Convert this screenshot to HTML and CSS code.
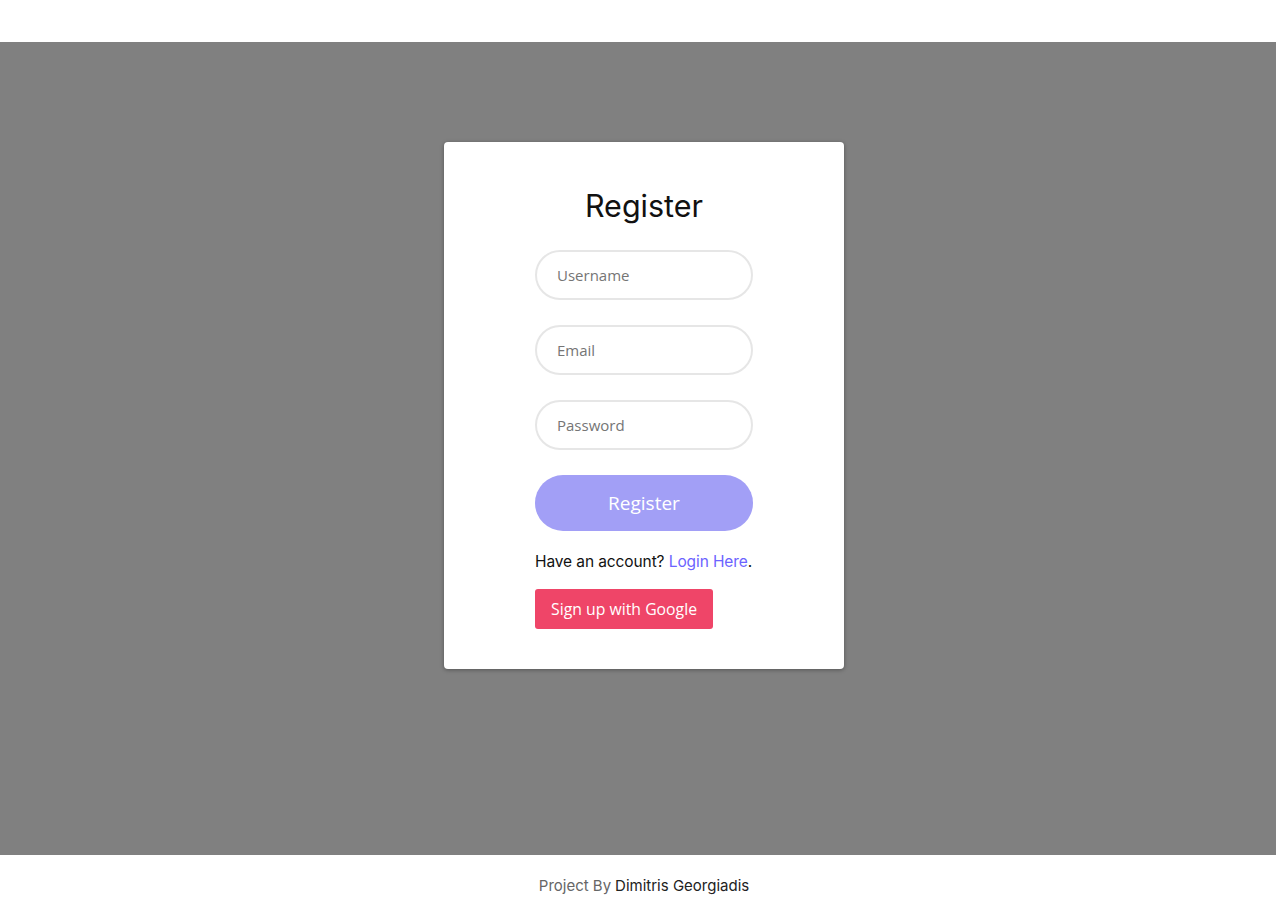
FILE: index.html
```html
<!DOCTYPE html>
<html>
<head>
<meta charset="utf-8">
<link rel="stylesheet" href="styles.css">
</head>
<body>
<header class="topbar"></header>
<main class="stage">
  <div class="card">
    <h1 class="title">Register</h1>
    <form class="form">
      <input class="field" type="text" placeholder="Username">
      <input class="field" type="email" placeholder="Email">
      <input class="field" type="password" placeholder="Password">
      <button class="btn-register" type="button">Register</button>
      <p class="have">Have an account? <a class="login" href="#">Login Here</a>.</p>
      <button class="btn-google" type="button">Sign up with Google</button>
    </form>
  </div>
</main>
<footer class="footer">
  <span class="by">Project By</span> <span class="name">Dimitris Georgiadis</span>
</footer>
</body>
</html>
```
FILE: styles.css
```css
* { box-sizing: border-box; }
html, body { margin: 0; padding: 0; overflow: hidden; }
body {
  font-family: "Inter", "Liberation Sans", sans-serif;
  background: #fff;
}
.topbar { height: 42px; background: #fff; }
.stage {
  height: 813px;
  background: #808080;
  padding-top: 100px;
  padding-left: 12px;
  display: flex;
  justify-content: center;
  align-items: flex-start;
}
.card {
  width: 400px;
  height: 527px;
  background: #fff;
  border-radius: 4px;
  box-shadow: 0 1px 4px rgba(0,0,0,0.35);
  padding-top: 45px;
  display: flex;
  flex-direction: column;
  align-items: center;
}
.title {
  margin: 0 0 25px;
  font-family: "Inter", sans-serif;
  font-weight: 400;
  font-size: 30.5px;
  line-height: 38px;
  color: #111;
}
.form {
  width: 218px;
  display: flex;
  flex-direction: column;
  align-items: flex-start;
}
.field {
  width: 218px;
  height: 50px;
  border: 2px solid #e6e6e6;
  border-radius: 25px;
  padding: 0 20px;
  margin-bottom: 25px;
  font-family: "Open Sans", "Noto Sans", sans-serif;
  font-size: 15px;
  color: #333;
  outline: none;
  background: #fff;
}
.field::placeholder { color: #757575; }
.btn-register {
  width: 218px;
  height: 56px;
  border: none;
  border-radius: 28px;
  background: #a29ff6;
  color: #fff;
  font-family: "Open Sans", "Noto Sans", sans-serif;
  font-size: 19px;
  cursor: pointer;
}
.have {
  margin: 21px 0 0;
  font-family: "Inter", sans-serif;
  font-size: 15.5px;
  line-height: 20px;
  letter-spacing: -0.1px;
  white-space: nowrap;
  color: #111;
}
.login { color: #6c63ff; text-decoration: none; }
.btn-google {
  margin-top: 17px;
  height: 40px;
  padding: 0 16px;
  border: none;
  border-radius: 3px;
  background: #ef4568;
  color: #fff;
  font-family: "Open Sans", "Noto Sans", sans-serif;
  font-size: 15.8px;
  cursor: pointer;
}
.footer {
  height: 51px;
  display: flex;
  justify-content: center;
  align-items: center;
  gap: 4px;
  font-family: "Inter", sans-serif;
  font-size: 15px;
  padding: 10px 0 0 12px;
}
.by { color: #666; }
.name { color: #222; }
```
